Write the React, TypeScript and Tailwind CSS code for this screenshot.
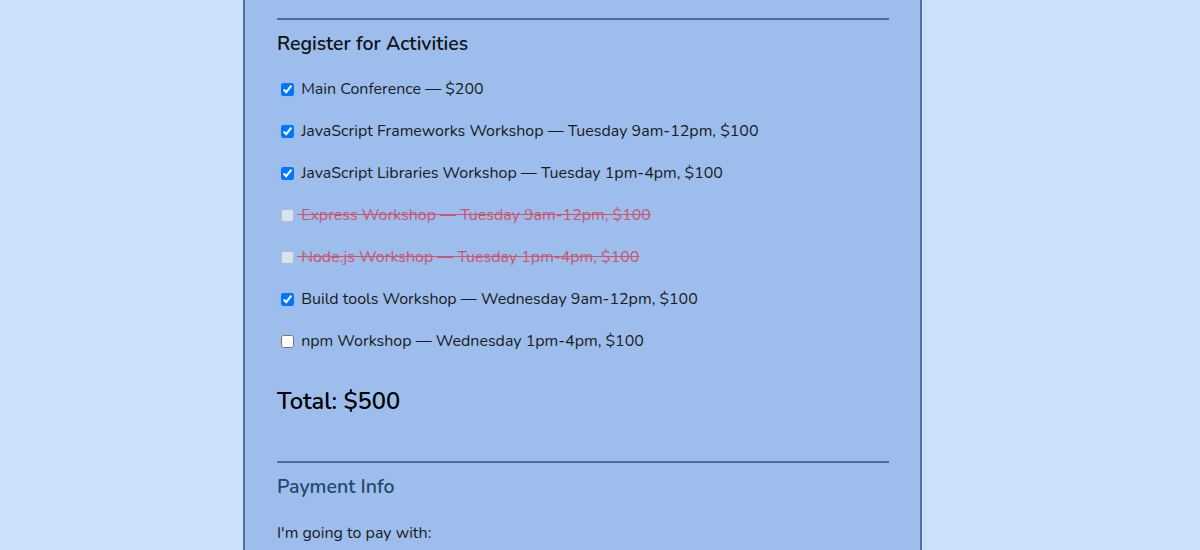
import React from "react";

interface Activity {
  label: string;
  checked: boolean;
  disabled?: boolean;
}

const activities: Activity[] = [
  { label: "Main Conference — $200", checked: true },
  { label: "JavaScript Frameworks Workshop — Tuesday 9am-12pm, $100", checked: true },
  { label: "JavaScript Libraries Workshop — Tuesday 1pm-4pm, $100", checked: true },
  { label: "Express Workshop — Tuesday 9am-12pm, $100", checked: false, disabled: true },
  { label: "Node.js Workshop — Tuesday 1pm-4pm, $100", checked: false, disabled: true },
  { label: "Build tools Workshop — Wednesday 9am-12pm, $100", checked: true },
  { label: "npm Workshop — Wednesday 1pm-4pm, $100", checked: false },
];

const App: React.FC = () => {
  return (
    <div
      className="w-[1200px] h-[550px] overflow-hidden bg-[#cce0fa] text-[#1b1b1b]"
      style={{ fontFamily: "Nunito, Lato, 'Noto Sans', sans-serif" }}
    >
      <div className="ml-[243px] w-[679px] h-full bg-[#9dbeed] border-x-2 border-[#4b72a0] px-[32px]">
        <div className="pt-[18px]">
          <div className="h-[2px] w-[612px] bg-[#4a6f96]" />
        </div>

        <h2 className="mt-[10px] text-[19.5px] leading-[28px] font-semibold text-[#111]">
          Register for Activities
        </h2>

        <div className="mt-[19px] flex flex-col gap-[18px]">
          {activities.map((a, i) => (
            <label key={i} className="flex items-center h-[24px] text-[16px] leading-[24px]">
              <input
                type="checkbox"
                defaultChecked={a.checked}
                disabled={a.disabled}
                className="ml-[4px] mr-[3px] w-[13px] h-[13px]"
              />
              <span className={a.disabled ? "whitespace-pre line-through text-[#c9566e]" : "whitespace-pre"}>
                {" " + a.label}
              </span>
            </label>
          ))}
        </div>

        <p className="mt-[32px] text-[23.7px] leading-[32px] font-semibold text-black">Total: $500</p>

        <div className="mt-[44px] h-[2px] w-[612px] bg-[#4a6f96]" />

        <h3 className="mt-[10px] text-[19.5px] leading-[28px] font-semibold text-[#1f4a68]">Payment Info</h3>

        <p className="mt-[20px] text-[16px] leading-[24px]">I'm going to pay with:</p>
      </div>
    </div>
  );
};

export default App;
